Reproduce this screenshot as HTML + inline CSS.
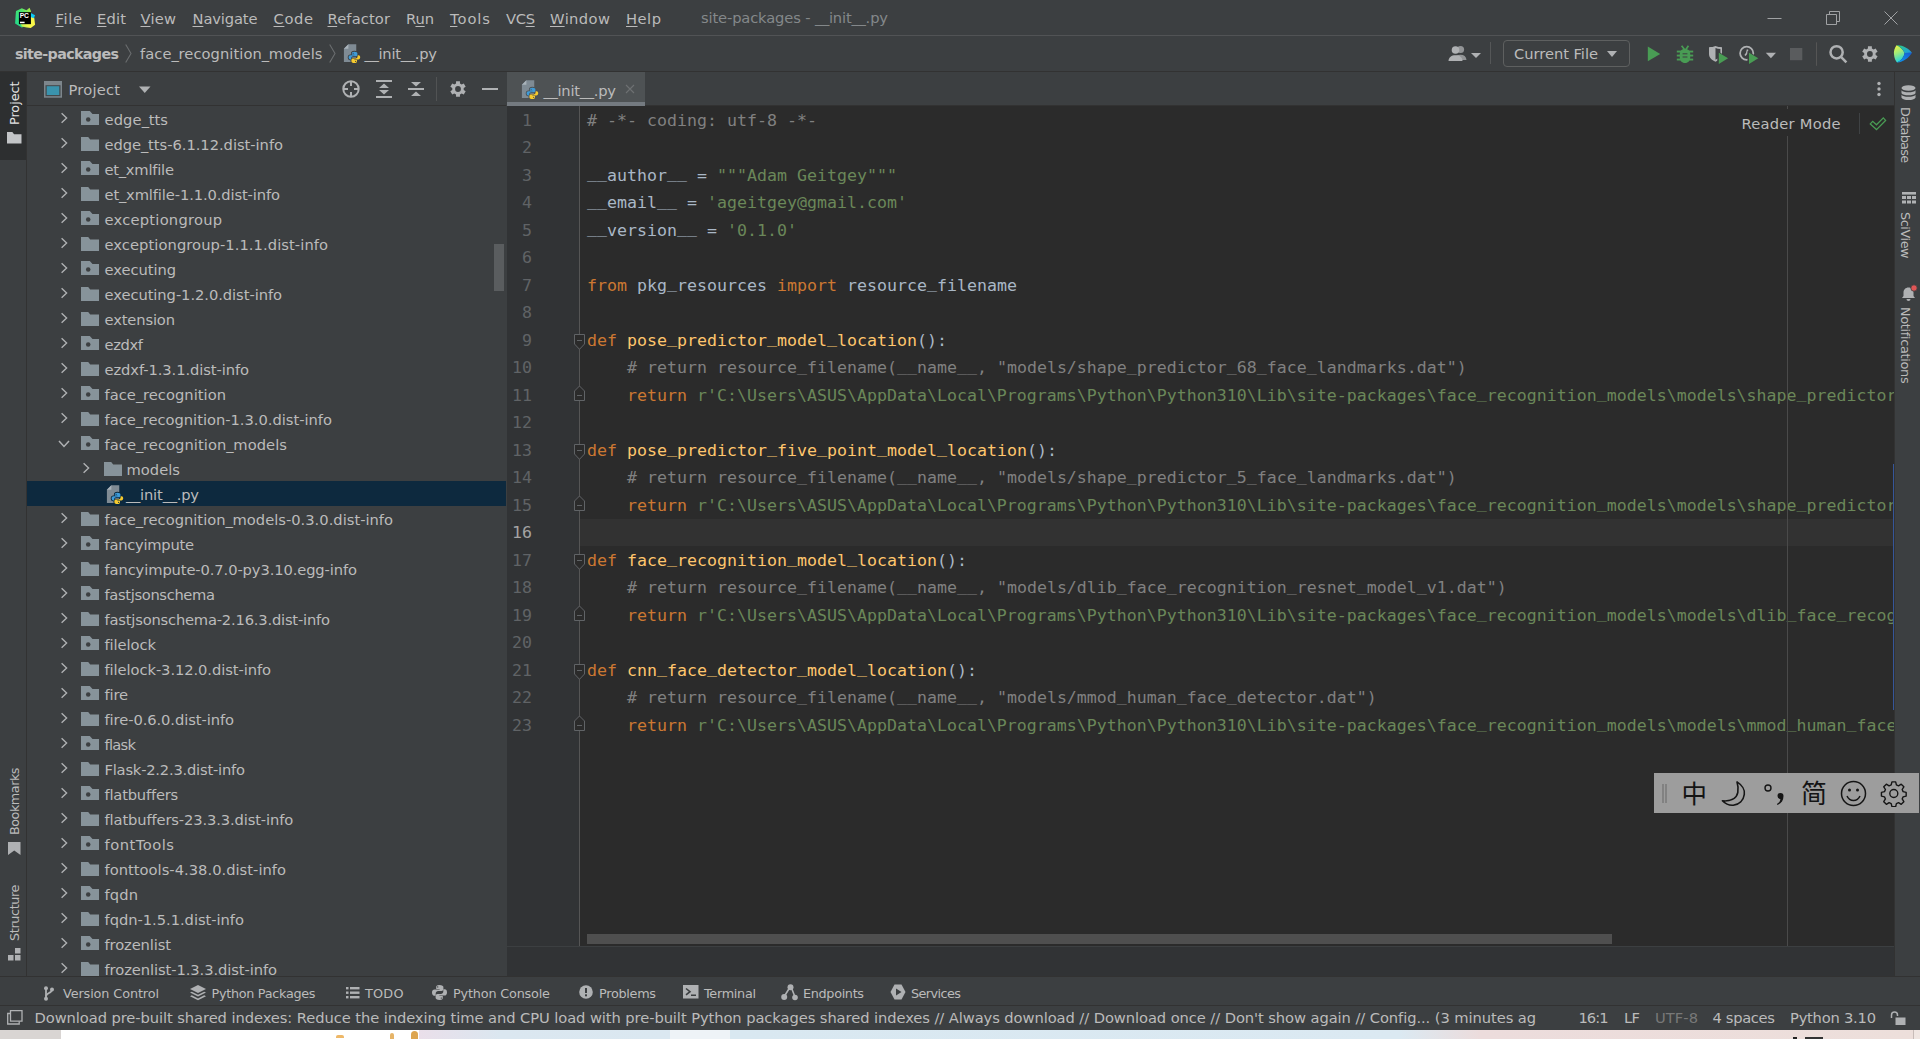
<!DOCTYPE html>
<html lang="en"><head><meta charset="utf-8"><title>site-packages - __init__.py</title>
<style>
*{box-sizing:border-box;margin:0;padding:0}
html,body{width:1920px;height:1039px;overflow:hidden;background:#3c3f41}
body{font-family:"DejaVu Sans","Liberation Sans",sans-serif;font-size:14.7px;letter-spacing:0;color:#bbbbbb;position:relative}
.abs{position:absolute}
.t{position:absolute;white-space:pre;line-height:20px}
u{text-decoration:underline;text-underline-offset:2px;text-decoration-thickness:1px}
#menubar{left:0;top:0;width:1920px;height:36px;background:#3c3f41}
#navbar{left:0;top:35px;width:1920px;height:37px;background:#3c3f41;border-top:1px solid #515355;border-bottom:1px solid #323232}
#leftstrip{left:0;top:72px;width:27px;height:904px;background:#3c3f41;border-right:1px solid #323232}
#proj{left:27px;top:72px;width:479px;height:904px;background:#3c3f41;overflow:hidden}
#projhdr{left:0;top:0;width:479px;height:34px}
.row{position:absolute;left:0;width:479px;height:25px}
.row.sel{background:#0d293e}
.row .lbl{position:absolute;top:3.5px;line-height:20px;white-space:pre;color:#bbbbbb}
.row svg{position:absolute}
#edtabs{left:507px;top:72px;width:1387px;height:34px;background:#3c3f41}
#tab{left:0;top:0;width:138px;height:34px;background:#4e5254}
#editor{left:507px;top:106px;width:1387px;height:840px;background:#2b2b2b;overflow:hidden}
#gutter{left:0;top:0;width:73px;height:840px;background:#313335;border-right:1px solid #555555}
.ln{position:absolute;left:0;width:25px;text-align:right;color:#606366;font-family:"DejaVu Sans Mono","Liberation Mono",monospace;font-size:16.6px;letter-spacing:.006px;line-height:27.5px;height:27.5px;margin-top:.7px;padding-right:0}
.cl{position:absolute;left:80px;white-space:pre;color:#a9b7c6;font-family:"DejaVu Sans Mono","Liberation Mono",monospace;font-size:16.6px;letter-spacing:.006px;line-height:27.5px;height:27.5px;margin-top:.7px}
.cl i{font-style:normal;position:relative;top:-2.5px}.k{color:#cc7832}.s{color:#6a8759}.c{color:#808080}.f{color:#ffc66d}
#crumbs{left:507px;top:946px;width:1387px;height:30px;background:#313335;border-top:1px solid #3c3f41}
#rightstrip{left:1894px;top:72px;width:26px;height:904px;background:#3c3f41;border-left:1px solid #323232}
#bottomstrip{left:0;top:976px;width:1920px;height:29px;background:#3c3f41;border-top:1px solid #323232}
#status{left:0;top:1005px;width:1920px;height:25px;background:#3c3f41;border-top:1px solid #323232}
#desk{left:0;top:1030px;width:1920px;height:9px;background:linear-gradient(90deg,#d9d5d3 0,#d9d5d3 61px,#ffffff 61px,#ffffff 419.5px,#eadfea 419.5px,#dbe7f0 500px,#dbe8f1 670px,#eef3f7 670px,#eef3f7 730px,#d9e8f1 730px,#dbe9f2 1400px,#ecdcdc 1480px,#eddfdb 1913px,#c8bcb8 1913px,#c8bcb8 1914px,#f0e6e2 1914px,#f0e6e2 1920px)}
.vt{position:absolute;white-space:pre;font-size:13.5px;letter-spacing:.5px;line-height:16px;color:#bbbbbb}
.bt{position:absolute;top:6px;white-space:pre;font-size:13.5px;letter-spacing:.35px;line-height:18px;color:#bbbbbb}
.st{position:absolute;top:1px;white-space:pre;line-height:20px;color:#bbbbbb}

.ic{position:absolute}
</style></head><body>
<div id="menubar" class="abs"><svg class="ic" style="left:14px;top:7px" width="23" height="22" viewBox="0 0 23 22">
<defs><linearGradient id="pg1" x1="0" y1="1" x2="1" y2="0"><stop offset="0" stop-color="#1fd690"/><stop offset=".6" stop-color="#45e372"/><stop offset="1" stop-color="#b6f043"/></linearGradient>
<linearGradient id="pg2" x1="0" y1="1" x2="1" y2="0"><stop offset="0" stop-color="#9bea4f"/><stop offset=".35" stop-color="#f4f648"/><stop offset="1" stop-color="#fcf84a"/></linearGradient></defs>
<polygon points="2.0,3.9 7.8,1.2 12.5,3.3 15.5,0.8 16.9,3.9 16.9,17.0 7.8,20.5 1.1,16.5 1.7,7.3" fill="url(#pg1)"/>
<polygon points="6.9,17.2 16.9,17.0 16.9,10.1 20.2,10.4 21.1,17.8 16.8,21.0 12.5,20.5 7.8,19.6" fill="url(#pg2)"/>
<polygon points="16.9,5.9 21.1,8.2 19.8,11.2 16.9,10.1" fill="#0ccaf5"/>
<rect x="4.900" y="5.150" width="12" height="12" fill="#000"/>
<text x="5.700" y="11" font-family="Liberation Sans,sans-serif" font-weight="bold" font-size="6.700" letter-spacing="-.2" fill="#fff">PC</text><rect x="6" y="14.700" width="4.600" height="1.500" fill="#fff"/></svg><span class="t" style="left:55.5px;top:9px;font-size:14.7px;letter-spacing:0.641px;color:#bbbbbb;"><u>F</u>ile</span><span class="t" style="left:97px;top:9px;font-size:14.7px;letter-spacing:0.182px;color:#bbbbbb;"><u>E</u>dit</span><span class="t" style="left:140.5px;top:9px;font-size:14.7px;letter-spacing:0.214px;color:#bbbbbb;"><u>V</u>iew</span><span class="t" style="left:192.5px;top:9px;font-size:14.7px;letter-spacing:-0.127px;color:#bbbbbb;"><u>N</u>avigate</span><span class="t" style="left:273.5px;top:9px;font-size:14.7px;letter-spacing:0.63px;color:#bbbbbb;"><u>C</u>ode</span><span class="t" style="left:327.5px;top:9px;font-size:14.7px;letter-spacing:0.125px;color:#bbbbbb;"><u>R</u>efactor</span><span class="t" style="left:406px;top:9px;font-size:14.7px;letter-spacing:-0.086px;color:#bbbbbb;">R<u>u</u>n</span><span class="t" style="left:450px;top:9px;font-size:14.7px;letter-spacing:0.953px;color:#bbbbbb;"><u>T</u>ools</span><span class="t" style="left:506px;top:9px;font-size:14.7px;letter-spacing:-0.32px;color:#bbbbbb;">VC<u>S</u></span><span class="t" style="left:550px;top:9px;font-size:14.7px;letter-spacing:0.416px;color:#bbbbbb;"><u>W</u>indow</span><span class="t" style="left:626px;top:9px;font-size:14.7px;letter-spacing:0.505px;color:#bbbbbb;"><u>H</u>elp</span><span class="t" style="left:701px;top:7.5px;font-size:14.7px;letter-spacing:-0.138px;color:#84888a;">site-packages - <span style="letter-spacing:-0.344px">_</span><span style="letter-spacing:-0.344px">_</span>init<span style="letter-spacing:-0.344px">_</span><span style="letter-spacing:-0.344px">_</span>.py</span><svg class="ic" style="left:1760px;top:6px" width="150" height="26" viewBox="0 0 150 26"><g stroke="#a0a2a4" stroke-width="1" fill="none"><path d="M7.500 12.500h14"/><path d="M66.500 8.500h10v10h-10z"/><path d="M69.500 8.500v-3h10v10h-3"/><path d="M124.500 5.500l13 13M137.500 5.500l-13 13"/></g></svg></div>
<div id="navbar" class="abs"><span class="t" style="left:15px;top:7.5px;font-size:14.3px;letter-spacing:-0.652px;color:#bbbbbb;font-weight:bold;">site-packages</span><svg class="ic" style="left:125px;top:8px" width="8" height="19" viewBox="0 0 8 19"><path d="M.7 .5l5.300 9-5.300 9" fill="none" stroke="#6a6d6f" stroke-width="1.100"/></svg><span class="t" style="left:140px;top:7.5px;font-size:14.7px;letter-spacing:0.058px;color:#bbbbbb;">face<span style="letter-spacing:-0.344px">_</span>recognition<span style="letter-spacing:-0.344px">_</span>models</span><svg class="ic" style="left:329px;top:8px" width="8" height="19" viewBox="0 0 8 19"><path d="M.7 .5l5.300 9-5.300 9" fill="none" stroke="#6a6d6f" stroke-width="1.100"/></svg><svg class="ic" style="left:342.85px;top:7.3px" width="18" height="21" viewBox="0 0 18 21"><path d="M5.400 1.200h7.850V19H.9V5.700z" fill="#7f8b94"/><path d="M5.400 1.200v4.500H.9z" fill="#a9b3ba"/>
<g transform="translate(5.600 8.700) scale(.967 .942)"><path d="M5.900 0C3.900 0 3.300.900 3.300 1.900v1.400h2.800v.5H1.900C.700 3.800 0 4.700 0 6s.600 2.300 1.700 2.300h1V6.800c0-1.100.900-2 2-2h2.800c.900 0 1.600-.7 1.600-1.600V1.900C9.100.900 8.300 0 5.900 0z" fill="#3c3f41" stroke="#3c3f41" stroke-width="1.800"/><path d="M5.900 0C3.900 0 3.300.900 3.300 1.900v1.400h2.800v.5H1.900C.700 3.800 0 4.700 0 6s.600 2.300 1.700 2.300h1V6.800c0-1.100.900-2 2-2h2.800c.900 0 1.600-.7 1.600-1.600V1.900C9.100.900 8.300 0 5.900 0z" transform="rotate(180 6 6)" fill="#3c3f41" stroke="#3c3f41" stroke-width="1.800"/>
<path d="M5.900 0C3.900 0 3.300.900 3.300 1.900v1.400h2.800v.5H1.900C.700 3.800 0 4.700 0 6s.600 2.300 1.700 2.300h1V6.800c0-1.100.900-2 2-2h2.800c.900 0 1.600-.7 1.600-1.600V1.900C9.100.900 8.300 0 5.900 0z" fill="#3e9bd8"/><path d="M5.900 0C3.900 0 3.300.900 3.300 1.900v1.400h2.800v.5H1.900C.700 3.800 0 4.700 0 6s.600 2.300 1.700 2.300h1V6.800c0-1.100.900-2 2-2h2.800c.900 0 1.600-.7 1.600-1.600V1.900C9.100.900 8.300 0 5.900 0z" transform="rotate(180 6 6)" fill="#f5ca2e"/><circle cx="4.700" cy="1.700" r=".6" fill="#3c3f41"/><circle cx="7.300" cy="10.300" r=".6" fill="#3c3f41"/></g></svg><span class="t" style="left:364.5px;top:7.5px;font-size:14.7px;letter-spacing:-0.237px;color:#bbbbbb;"><span style="letter-spacing:-0.344px">_</span><span style="letter-spacing:-0.344px">_</span>init<span style="letter-spacing:-0.344px">_</span><span style="letter-spacing:-0.344px">_</span>.py</span><svg class="ic" style="left:1448px;top:8px" width="34" height="20" viewBox="0 0 34 20"><g fill="#afb1b3"><circle cx="12.500" cy="5.500" r="3.600" opacity=".75"/><path d="M6.500 16c.3-3.500 2.500-5.300 6-5.300s5.700 1.800 6 5.300z" opacity=".75"/><circle cx="7.500" cy="6" r="3.800"/><path d="M.5 17c.3-3.800 2.800-5.700 7-5.700s6.700 1.900 7 5.700z"/><path d="M23 9h10l-5 5z"/></g></svg><div class="abs" style="left:1490px;top:6px;width:1px;height:22px;background:#555758"></div><div class="abs" style="left:1503px;top:4px;width:127px;height:27px;border:1px solid #5e6060;border-radius:4px"></div><span class="t" style="left:1514px;top:8.2px;font-size:14.7px;letter-spacing:-0.038px;color:#bbbbbb;">Current File</span><svg class="ic" style="left:1606px;top:14px" width="12" height="8" viewBox="0 0 12 8"><path d="M1 1h10l-5 6z" fill="#afb1b3"/></svg><svg class="ic" style="left:1640px;top:4px" width="280" height="28" viewBox="0 0 280 28">
<path d="M7.800 6.600v14.700l12.400-7.350z" fill="#499c54"/>
<g fill="#499c54"><path d="M45 8.700c3.200 0 5.200 2.300 5.200 5.300v3.500c0 3-2 5.500-5.200 5.500s-5.200-2.500-5.200-5.500V14c0-3 2-5.300 5.200-5.300z"/><rect x="36.800" y="10.600" width="16.400" height="1.900"/><rect x="36.800" y="14.600" width="16.400" height="1.900"/><rect x="36.800" y="18.600" width="16.400" height="1.900"/></g>
<g stroke="#499c54" stroke-width="1.700" fill="none"><path d="M41.600 5.800l2.700 3.500M48.400 5.800l-2.300 3.500"/></g>
<g fill="#3c3f41"><rect x="42.600" y="13.300" width="4.800" height="1"/><rect x="42.600" y="16.500" width="4.800" height="1"/></g>
<path d="M69 7.200c2.500 0 4.500-.4 6.500-1.200 2 .8 4 1.200 6.500 1.200v6.800c0 3.500-2.600 6-6.500 7.700-3.900-1.700-6.500-4.200-6.500-7.700z" fill="#afb1b3"/><path d="M75.500 7.900c1.600.6 3.200.9 4.900 1v5.100c0 2.300-1.700 4.300-4.900 5.800z" fill="#3c3f41"/>
<path d="M77.300 11v14.800l12.800-7.400z" fill="#3c3f41"/><path d="M78.800 12.800v11.100l9.300-5.550z" fill="#499c54"/>
<g fill="none" stroke="#afb1b3" stroke-width="1.800"><circle cx="106.700" cy="13.300" r="6.600"/></g><path d="M107.600 9.500l-.9 3.800-1.700 2.300" fill="none" stroke="#afb1b3" stroke-width="1.600"/>
<path d="M107.500 11v14.800l12.800-7.400z" fill="#3c3f41"/><path d="M109 12.800v11.100l9.300-5.550z" fill="#499c54"/>
<path d="M125.800 12.800h10.200l-5.100 5.400z" fill="#afb1b3"/>
<rect x="150" y="8" width="12.300" height="12.200" fill="#5a5c5e"/>
<path d="M176.500 2.300v23.500" stroke="#555555" stroke-width="1"/>
<g fill="none" stroke="#afb1b3" stroke-width="2.500"><circle cx="196.600" cy="12.300" r="6.100"/><path d="M201.200 17.200l5.200 5.200"/></g>
<path transform="translate(229.900 14)" fill="#afb1b3" fill-rule="evenodd" d="M1.98 -5.45L1.94 -7.76L-1.94 -7.76L-1.98 -5.45L-3.73 -4.44L-5.75 -5.56L-7.69 -2.21L-5.71 -1.01L-5.71 1.01L-7.69 2.21L-5.75 5.56L-3.73 4.44L-1.98 5.45L-1.94 7.76L1.94 7.76L1.98 5.45L3.73 4.44L5.75 5.56L7.69 2.21L5.71 1.01L5.71 -1.01L7.69 -2.21L5.75 -5.56L3.73 -4.44zM2.90 0A2.90 2.90 0 1 0 -2.90 0A2.90 2.90 0 1 0 2.90 0z"/>
<defs><linearGradient id="cg1" x1="0" y1="0" x2=".3" y2="1"><stop offset="0" stop-color="#f6f538"/><stop offset=".5" stop-color="#9fe97c"/><stop offset="1" stop-color="#25d3dc"/></linearGradient>
<linearGradient id="cg2" x1="0" y1="0" x2="1" y2="1"><stop offset="0" stop-color="#2fcf7c"/><stop offset="1" stop-color="#1a96ec"/></linearGradient>
<linearGradient id="cg3" x1="1" y1="0" x2="0" y2="1"><stop offset="0" stop-color="#1858d0"/><stop offset="1" stop-color="#0d9df2"/></linearGradient></defs>
<path d="M256.500 5.200C254.500 8 253.600 11.500 254 14.300c.3 3.700 1.500 6.700 3.100 8.300 4.200-2.300 7-5.800 7.500-9.700-1.600-3.400-4.400-6.200-8.100-7.700z" fill="url(#cg1)"/>
<path d="M256.500 5.200C262.500 4.800 268.500 8.300 272 12.700l-7.400.2c-1.600-3.400-4.400-6.200-8.100-7.700z" fill="url(#cg2)"/>
<path d="M272 12.700c-3 5-8.500 9.300-14.900 9.900 4.200-2.300 7-5.800 7.500-9.700z" fill="url(#cg3)"/>
</svg></div>
<div id="leftstrip" class="abs"><div class="abs" style="left:0;top:0;width:26px;height:88px;background:#2d2f30"></div><span class="vt" style="left:7px;top:52.5px;font-size:12.8px;letter-spacing:-0.049px;color:#e4e4e4;transform-origin:0 0;transform:rotate(-90deg)">Project</span><svg class="ic" style="left:7px;top:60px" width="14.500" height="11.600" viewBox="0 0 15 12"><path d="M0 0h5.500l1.800 2.300H15V12H0z" fill="#c3c5c7"/></svg><span class="vt" style="left:7px;top:762.5px;font-size:12.8px;letter-spacing:-0.5px;color:#bbbbbb;transform-origin:0 0;transform:rotate(-90deg)">Bookmarks</span><svg class="ic" style="left:8px;top:770px" width="13" height="13" viewBox="0 0 13 13"><path d="M0 0h12.500v13l-6.250-4.500L0 13z" fill="#afb1b3"/></svg><span class="vt" style="left:7px;top:868.5px;font-size:12.8px;letter-spacing:-0.379px;color:#bbbbbb;transform-origin:0 0;transform:rotate(-90deg)">Structure</span><svg class="ic" style="left:8px;top:876px" width="13" height="13" viewBox="0 0 13 13"><g fill="#afb1b3"><rect x="7" y="0" width="5.500" height="5.500"/><rect x="0" y="7" width="5.500" height="5.500"/><rect x="7" y="7" width="5.500" height="5.500"/></g></svg></div>
<div id="proj" class="abs"><div id="projhdr" class="abs"><div class="abs" style="left:0;top:33px;width:479px;height:1px;background:#323232"></div><svg class="ic" style="left:17px;top:9px" width="19" height="17" viewBox="0 0 19 17"><rect x="0" y="0" width="18" height="16.700" fill="#7d868c"/><rect x="1.500" y="4.200" width="15" height="11" fill="#43484b"/><rect x="2.700" y="5.200" width="12.600" height="8.800" fill="#3a93ad"/></svg><span class="t" style="left:41.5px;top:8.2px;font-size:14.7px;letter-spacing:0.206px;color:#bbbbbb;">Project</span><svg class="ic" style="left:112px;top:14px" width="12" height="8" viewBox="0 0 12 8"><path d="M0 .5h11.500l-5.750 6.500z" fill="#afb1b3"/></svg><svg class="ic" style="left:310px;top:5px" width="165" height="24" viewBox="0 0 165 24"><g fill="none" stroke="#afb1b3" stroke-width="2"><circle cx="14" cy="12" r="7.700"/><path d="M14 4v5M14 15v5M6 12h5M17 12h5"/></g><g fill="#afb1b3"><rect x="39" y="3" width="16" height="2"/><rect x="39" y="19" width="16" height="2"/><path d="M47 6.500l5 4.500h-10zM47 17.500l5-4.500h-10z"/><rect x="71" y="11" width="16" height="2"/><path d="M79 9.500l5-4.500h-10zM79 14.500l5 4.500h-10z"/></g><path d="M99.500 0v24" stroke="#515354" stroke-width="1"/><path transform="translate(121 12) scale(1)" fill="#afb1b3" fill-rule="evenodd" d="M1.98 -5.45L1.94 -7.76L-1.94 -7.76L-1.98 -5.45L-3.73 -4.44L-5.75 -5.56L-7.69 -2.21L-5.71 -1.01L-5.71 1.01L-7.69 2.21L-5.75 5.56L-3.73 4.44L-1.98 5.45L-1.94 7.76L1.94 7.76L1.98 5.45L3.73 4.44L5.75 5.56L7.69 2.21L5.71 1.01L5.71 -1.01L7.69 -2.21L5.75 -5.56L3.73 -4.44zM2.90 0A2.90 2.90 0 1 0 -2.90 0A2.90 2.90 0 1 0 2.90 0z"/><rect x="145" y="11" width="16" height="2" fill="#afb1b3"/></svg></div>
<div class="row" style="top:34px"><svg width="10" height="12" viewBox="0 0 10 12" style="left:33px;top:6px"><path d="M1.600 1.200l5 4.800-5 4.800" fill="none" stroke="#afb1b3" stroke-width="1.400"/></svg><svg width="18" height="14" viewBox="0 0 18 14" style="left:54px;top:5px"><path d="M0 0h8.800l2.700 3H18V14H0z" fill="#87939a"/><circle cx="7.200" cy="8.600" r="2.250" fill="#3c3f41"/></svg><span class="lbl" style="left:77.5px;letter-spacing:0.102px">edge<span style="letter-spacing:-0.344px">_</span>tts</span></div>
<div class="row" style="top:59px"><svg width="10" height="12" viewBox="0 0 10 12" style="left:33px;top:6px"><path d="M1.600 1.200l5 4.800-5 4.800" fill="none" stroke="#afb1b3" stroke-width="1.400"/></svg><svg width="18" height="14" viewBox="0 0 18 14" style="left:54px;top:6px"><path d="M0 0h7.2l2 2.6H18V14H0z" fill="#87939a"/></svg><span class="lbl" style="left:77.5px;letter-spacing:-0.032px">edge<span style="letter-spacing:-0.344px">_</span>tts-6.1.12.dist-info</span></div>
<div class="row" style="top:84px"><svg width="10" height="12" viewBox="0 0 10 12" style="left:33px;top:6px"><path d="M1.600 1.200l5 4.800-5 4.800" fill="none" stroke="#afb1b3" stroke-width="1.400"/></svg><svg width="18" height="14" viewBox="0 0 18 14" style="left:54px;top:5px"><path d="M0 0h8.800l2.700 3H18V14H0z" fill="#87939a"/><circle cx="7.200" cy="8.600" r="2.250" fill="#3c3f41"/></svg><span class="lbl" style="left:77.5px;letter-spacing:-0.219px">et<span style="letter-spacing:-0.344px">_</span>xmlfile</span></div>
<div class="row" style="top:109px"><svg width="10" height="12" viewBox="0 0 10 12" style="left:33px;top:6px"><path d="M1.600 1.200l5 4.800-5 4.800" fill="none" stroke="#afb1b3" stroke-width="1.400"/></svg><svg width="18" height="14" viewBox="0 0 18 14" style="left:54px;top:6px"><path d="M0 0h7.2l2 2.6H18V14H0z" fill="#87939a"/></svg><span class="lbl" style="left:77.5px;letter-spacing:-0.115px">et<span style="letter-spacing:-0.344px">_</span>xmlfile-1.1.0.dist-info</span></div>
<div class="row" style="top:134px"><svg width="10" height="12" viewBox="0 0 10 12" style="left:33px;top:6px"><path d="M1.600 1.200l5 4.800-5 4.800" fill="none" stroke="#afb1b3" stroke-width="1.400"/></svg><svg width="18" height="14" viewBox="0 0 18 14" style="left:54px;top:5px"><path d="M0 0h8.800l2.700 3H18V14H0z" fill="#87939a"/><circle cx="7.200" cy="8.600" r="2.250" fill="#3c3f41"/></svg><span class="lbl" style="left:77.5px;letter-spacing:0.236px">exceptiongroup</span></div>
<div class="row" style="top:159px"><svg width="10" height="12" viewBox="0 0 10 12" style="left:33px;top:6px"><path d="M1.600 1.200l5 4.800-5 4.800" fill="none" stroke="#afb1b3" stroke-width="1.400"/></svg><svg width="18" height="14" viewBox="0 0 18 14" style="left:54px;top:6px"><path d="M0 0h7.2l2 2.6H18V14H0z" fill="#87939a"/></svg><span class="lbl" style="left:77.5px;letter-spacing:0.071px">exceptiongroup-1.1.1.dist-info</span></div>
<div class="row" style="top:184px"><svg width="10" height="12" viewBox="0 0 10 12" style="left:33px;top:6px"><path d="M1.600 1.200l5 4.800-5 4.800" fill="none" stroke="#afb1b3" stroke-width="1.400"/></svg><svg width="18" height="14" viewBox="0 0 18 14" style="left:54px;top:5px"><path d="M0 0h8.800l2.700 3H18V14H0z" fill="#87939a"/><circle cx="7.200" cy="8.600" r="2.250" fill="#3c3f41"/></svg><span class="lbl" style="left:77.5px;letter-spacing:-0.053px">executing</span></div>
<div class="row" style="top:209px"><svg width="10" height="12" viewBox="0 0 10 12" style="left:33px;top:6px"><path d="M1.600 1.200l5 4.800-5 4.800" fill="none" stroke="#afb1b3" stroke-width="1.400"/></svg><svg width="18" height="14" viewBox="0 0 18 14" style="left:54px;top:6px"><path d="M0 0h7.2l2 2.6H18V14H0z" fill="#87939a"/></svg><span class="lbl" style="left:77.5px;letter-spacing:-0.059px">executing-1.2.0.dist-info</span></div>
<div class="row" style="top:234px"><svg width="10" height="12" viewBox="0 0 10 12" style="left:33px;top:6px"><path d="M1.600 1.200l5 4.800-5 4.800" fill="none" stroke="#afb1b3" stroke-width="1.400"/></svg><svg width="18" height="14" viewBox="0 0 18 14" style="left:54px;top:6px"><path d="M0 0h7.2l2 2.6H18V14H0z" fill="#87939a"/></svg><span class="lbl" style="left:77.5px;letter-spacing:-0.139px">extension</span></div>
<div class="row" style="top:259px"><svg width="10" height="12" viewBox="0 0 10 12" style="left:33px;top:6px"><path d="M1.600 1.200l5 4.800-5 4.800" fill="none" stroke="#afb1b3" stroke-width="1.400"/></svg><svg width="18" height="14" viewBox="0 0 18 14" style="left:54px;top:5px"><path d="M0 0h8.800l2.700 3H18V14H0z" fill="#87939a"/><circle cx="7.200" cy="8.600" r="2.250" fill="#3c3f41"/></svg><span class="lbl" style="left:77.5px;letter-spacing:-0.359px">ezdxf</span></div>
<div class="row" style="top:284px"><svg width="10" height="12" viewBox="0 0 10 12" style="left:33px;top:6px"><path d="M1.600 1.200l5 4.800-5 4.800" fill="none" stroke="#afb1b3" stroke-width="1.400"/></svg><svg width="18" height="14" viewBox="0 0 18 14" style="left:54px;top:6px"><path d="M0 0h7.2l2 2.6H18V14H0z" fill="#87939a"/></svg><span class="lbl" style="left:77.5px;letter-spacing:-0.082px">ezdxf-1.3.1.dist-info</span></div>
<div class="row" style="top:309px"><svg width="10" height="12" viewBox="0 0 10 12" style="left:33px;top:6px"><path d="M1.600 1.200l5 4.800-5 4.800" fill="none" stroke="#afb1b3" stroke-width="1.400"/></svg><svg width="18" height="14" viewBox="0 0 18 14" style="left:54px;top:5px"><path d="M0 0h8.800l2.700 3H18V14H0z" fill="#87939a"/><circle cx="7.200" cy="8.600" r="2.250" fill="#3c3f41"/></svg><span class="lbl" style="left:77.5px;letter-spacing:0.039px">face<span style="letter-spacing:-0.344px">_</span>recognition</span></div>
<div class="row" style="top:334px"><svg width="10" height="12" viewBox="0 0 10 12" style="left:33px;top:6px"><path d="M1.600 1.200l5 4.800-5 4.800" fill="none" stroke="#afb1b3" stroke-width="1.400"/></svg><svg width="18" height="14" viewBox="0 0 18 14" style="left:54px;top:6px"><path d="M0 0h7.2l2 2.6H18V14H0z" fill="#87939a"/></svg><span class="lbl" style="left:77.5px;letter-spacing:-0.015px">face<span style="letter-spacing:-0.344px">_</span>recognition-1.3.0.dist-info</span></div>
<div class="row" style="top:359px"><svg width="12" height="10" viewBox="0 0 12 10" style="left:31px;top:8px"><path d="M1 2l5 5.5L11 2" fill="none" stroke="#afb1b3" stroke-width="1.5"/></svg><svg width="18" height="14" viewBox="0 0 18 14" style="left:54px;top:5px"><path d="M0 0h8.800l2.700 3H18V14H0z" fill="#87939a"/><circle cx="7.200" cy="8.600" r="2.250" fill="#3c3f41"/></svg><span class="lbl" style="left:77.5px;letter-spacing:0.058px">face<span style="letter-spacing:-0.344px">_</span>recognition<span style="letter-spacing:-0.344px">_</span>models</span></div>
<div class="row" style="top:384px"><svg width="10" height="12" viewBox="0 0 10 12" style="left:55px;top:6px"><path d="M1.600 1.200l5 4.800-5 4.800" fill="none" stroke="#afb1b3" stroke-width="1.400"/></svg><svg width="18" height="14" viewBox="0 0 18 14" style="left:77px;top:6px"><path d="M0 0h7.2l2 2.6H18V14H0z" fill="#87939a"/></svg><span class="lbl" style="left:99.5px;letter-spacing:0.022px">models</span></div>
<div class="row sel" style="top:409px"><svg class="ic" style="left:79px;top:3px" width="18" height="21" viewBox="0 0 18 21"><path d="M5.400 1.200h7.850V19H.9V5.700z" fill="#7f8b94"/><path d="M5.400 1.200v4.500H.9z" fill="#a9b3ba"/>
<g transform="translate(5.600 8.700) scale(.967 .942)"><path d="M5.900 0C3.900 0 3.300.900 3.300 1.900v1.400h2.800v.5H1.900C.700 3.800 0 4.700 0 6s.600 2.300 1.700 2.300h1V6.800c0-1.100.900-2 2-2h2.800c.900 0 1.600-.7 1.600-1.600V1.900C9.100.900 8.300 0 5.900 0z" fill="#0d293e" stroke="#0d293e" stroke-width="1.800"/><path d="M5.900 0C3.900 0 3.300.900 3.300 1.900v1.400h2.800v.5H1.900C.700 3.800 0 4.700 0 6s.600 2.300 1.700 2.300h1V6.800c0-1.100.900-2 2-2h2.800c.900 0 1.600-.7 1.600-1.600V1.900C9.100.900 8.300 0 5.900 0z" transform="rotate(180 6 6)" fill="#0d293e" stroke="#0d293e" stroke-width="1.800"/>
<path d="M5.900 0C3.900 0 3.300.900 3.300 1.900v1.400h2.800v.5H1.900C.700 3.800 0 4.700 0 6s.600 2.300 1.700 2.300h1V6.800c0-1.100.900-2 2-2h2.800c.900 0 1.600-.7 1.600-1.600V1.900C9.100.900 8.300 0 5.900 0z" fill="#3e9bd8"/><path d="M5.900 0C3.900 0 3.300.900 3.300 1.900v1.400h2.800v.5H1.900C.700 3.800 0 4.700 0 6s.600 2.300 1.700 2.300h1V6.800c0-1.100.900-2 2-2h2.800c.900 0 1.600-.7 1.600-1.600V1.900C9.100.900 8.300 0 5.900 0z" transform="rotate(180 6 6)" fill="#f5ca2e"/><circle cx="4.700" cy="1.700" r=".6" fill="#0d293e"/><circle cx="7.300" cy="10.300" r=".6" fill="#0d293e"/></g></svg><span class="lbl" style="left:99px;letter-spacing:-0.154px"><span style="letter-spacing:-0.344px">_</span><span style="letter-spacing:-0.344px">_</span>init<span style="letter-spacing:-0.344px">_</span><span style="letter-spacing:-0.344px">_</span>.py</span></div>
<div class="row" style="top:434px"><svg width="10" height="12" viewBox="0 0 10 12" style="left:33px;top:6px"><path d="M1.600 1.200l5 4.800-5 4.800" fill="none" stroke="#afb1b3" stroke-width="1.400"/></svg><svg width="18" height="14" viewBox="0 0 18 14" style="left:54px;top:6px"><path d="M0 0h7.2l2 2.6H18V14H0z" fill="#87939a"/></svg><span class="lbl" style="left:77.5px;letter-spacing:0.004px">face<span style="letter-spacing:-0.344px">_</span>recognition<span style="letter-spacing:-0.344px">_</span>models-0.3.0.dist-info</span></div>
<div class="row" style="top:459px"><svg width="10" height="12" viewBox="0 0 10 12" style="left:33px;top:6px"><path d="M1.600 1.200l5 4.800-5 4.800" fill="none" stroke="#afb1b3" stroke-width="1.400"/></svg><svg width="18" height="14" viewBox="0 0 18 14" style="left:54px;top:5px"><path d="M0 0h8.800l2.700 3H18V14H0z" fill="#87939a"/><circle cx="7.200" cy="8.600" r="2.250" fill="#3c3f41"/></svg><span class="lbl" style="left:77.5px;letter-spacing:-0.256px">fancyimpute</span></div>
<div class="row" style="top:484px"><svg width="10" height="12" viewBox="0 0 10 12" style="left:33px;top:6px"><path d="M1.600 1.200l5 4.800-5 4.800" fill="none" stroke="#afb1b3" stroke-width="1.400"/></svg><svg width="18" height="14" viewBox="0 0 18 14" style="left:54px;top:6px"><path d="M0 0h7.2l2 2.6H18V14H0z" fill="#87939a"/></svg><span class="lbl" style="left:77.5px;letter-spacing:-0.108px">fancyimpute-0.7.0-py3.10.egg-info</span></div>
<div class="row" style="top:509px"><svg width="10" height="12" viewBox="0 0 10 12" style="left:33px;top:6px"><path d="M1.600 1.200l5 4.800-5 4.800" fill="none" stroke="#afb1b3" stroke-width="1.400"/></svg><svg width="18" height="14" viewBox="0 0 18 14" style="left:54px;top:5px"><path d="M0 0h8.800l2.700 3H18V14H0z" fill="#87939a"/><circle cx="7.200" cy="8.600" r="2.250" fill="#3c3f41"/></svg><span class="lbl" style="left:77.5px;letter-spacing:-0.346px">fastjsonschema</span></div>
<div class="row" style="top:534px"><svg width="10" height="12" viewBox="0 0 10 12" style="left:33px;top:6px"><path d="M1.600 1.200l5 4.800-5 4.800" fill="none" stroke="#afb1b3" stroke-width="1.400"/></svg><svg width="18" height="14" viewBox="0 0 18 14" style="left:54px;top:6px"><path d="M0 0h7.2l2 2.6H18V14H0z" fill="#87939a"/></svg><span class="lbl" style="left:77.5px;letter-spacing:-0.195px">fastjsonschema-2.16.3.dist-info</span></div>
<div class="row" style="top:559px"><svg width="10" height="12" viewBox="0 0 10 12" style="left:33px;top:6px"><path d="M1.600 1.200l5 4.800-5 4.800" fill="none" stroke="#afb1b3" stroke-width="1.400"/></svg><svg width="18" height="14" viewBox="0 0 18 14" style="left:54px;top:5px"><path d="M0 0h8.800l2.700 3H18V14H0z" fill="#87939a"/><circle cx="7.200" cy="8.600" r="2.250" fill="#3c3f41"/></svg><span class="lbl" style="left:77.5px;letter-spacing:-0.076px">filelock</span></div>
<div class="row" style="top:584px"><svg width="10" height="12" viewBox="0 0 10 12" style="left:33px;top:6px"><path d="M1.600 1.200l5 4.800-5 4.800" fill="none" stroke="#afb1b3" stroke-width="1.400"/></svg><svg width="18" height="14" viewBox="0 0 18 14" style="left:54px;top:6px"><path d="M0 0h7.2l2 2.6H18V14H0z" fill="#87939a"/></svg><span class="lbl" style="left:77.5px;letter-spacing:-0.078px">filelock-3.12.0.dist-info</span></div>
<div class="row" style="top:609px"><svg width="10" height="12" viewBox="0 0 10 12" style="left:33px;top:6px"><path d="M1.600 1.200l5 4.800-5 4.800" fill="none" stroke="#afb1b3" stroke-width="1.400"/></svg><svg width="18" height="14" viewBox="0 0 18 14" style="left:54px;top:5px"><path d="M0 0h8.800l2.700 3H18V14H0z" fill="#87939a"/><circle cx="7.200" cy="8.600" r="2.250" fill="#3c3f41"/></svg><span class="lbl" style="left:77.5px;letter-spacing:-0.172px">fire</span></div>
<div class="row" style="top:634px"><svg width="10" height="12" viewBox="0 0 10 12" style="left:33px;top:6px"><path d="M1.600 1.200l5 4.800-5 4.800" fill="none" stroke="#afb1b3" stroke-width="1.400"/></svg><svg width="18" height="14" viewBox="0 0 18 14" style="left:54px;top:6px"><path d="M0 0h7.2l2 2.6H18V14H0z" fill="#87939a"/></svg><span class="lbl" style="left:77.5px;letter-spacing:-0.08px">fire-0.6.0.dist-info</span></div>
<div class="row" style="top:659px"><svg width="10" height="12" viewBox="0 0 10 12" style="left:33px;top:6px"><path d="M1.600 1.200l5 4.800-5 4.800" fill="none" stroke="#afb1b3" stroke-width="1.400"/></svg><svg width="18" height="14" viewBox="0 0 18 14" style="left:54px;top:5px"><path d="M0 0h8.800l2.700 3H18V14H0z" fill="#87939a"/><circle cx="7.200" cy="8.600" r="2.250" fill="#3c3f41"/></svg><span class="lbl" style="left:77.5px;letter-spacing:-0.73px">flask</span></div>
<div class="row" style="top:684px"><svg width="10" height="12" viewBox="0 0 10 12" style="left:33px;top:6px"><path d="M1.600 1.200l5 4.800-5 4.800" fill="none" stroke="#afb1b3" stroke-width="1.400"/></svg><svg width="18" height="14" viewBox="0 0 18 14" style="left:54px;top:6px"><path d="M0 0h7.2l2 2.6H18V14H0z" fill="#87939a"/></svg><span class="lbl" style="left:77.5px;letter-spacing:-0.21px">Flask-2.2.3.dist-info</span></div>
<div class="row" style="top:709px"><svg width="10" height="12" viewBox="0 0 10 12" style="left:33px;top:6px"><path d="M1.600 1.200l5 4.800-5 4.800" fill="none" stroke="#afb1b3" stroke-width="1.400"/></svg><svg width="18" height="14" viewBox="0 0 18 14" style="left:54px;top:5px"><path d="M0 0h8.800l2.700 3H18V14H0z" fill="#87939a"/><circle cx="7.200" cy="8.600" r="2.250" fill="#3c3f41"/></svg><span class="lbl" style="left:77.5px;letter-spacing:-0.2px">flatbuffers</span></div>
<div class="row" style="top:734px"><svg width="10" height="12" viewBox="0 0 10 12" style="left:33px;top:6px"><path d="M1.600 1.200l5 4.800-5 4.800" fill="none" stroke="#afb1b3" stroke-width="1.400"/></svg><svg width="18" height="14" viewBox="0 0 18 14" style="left:54px;top:6px"><path d="M0 0h7.2l2 2.6H18V14H0z" fill="#87939a"/></svg><span class="lbl" style="left:77.5px;letter-spacing:-0.124px">flatbuffers-23.3.3.dist-info</span></div>
<div class="row" style="top:759px"><svg width="10" height="12" viewBox="0 0 10 12" style="left:33px;top:6px"><path d="M1.600 1.200l5 4.800-5 4.800" fill="none" stroke="#afb1b3" stroke-width="1.400"/></svg><svg width="18" height="14" viewBox="0 0 18 14" style="left:54px;top:5px"><path d="M0 0h8.800l2.700 3H18V14H0z" fill="#87939a"/><circle cx="7.200" cy="8.600" r="2.250" fill="#3c3f41"/></svg><span class="lbl" style="left:77.5px;letter-spacing:0.512px">fontTools</span></div>
<div class="row" style="top:784px"><svg width="10" height="12" viewBox="0 0 10 12" style="left:33px;top:6px"><path d="M1.600 1.200l5 4.800-5 4.800" fill="none" stroke="#afb1b3" stroke-width="1.400"/></svg><svg width="18" height="14" viewBox="0 0 18 14" style="left:54px;top:6px"><path d="M0 0h7.2l2 2.6H18V14H0z" fill="#87939a"/></svg><span class="lbl" style="left:77.5px;letter-spacing:0.018px">fonttools-4.38.0.dist-info</span></div>
<div class="row" style="top:809px"><svg width="10" height="12" viewBox="0 0 10 12" style="left:33px;top:6px"><path d="M1.600 1.200l5 4.800-5 4.800" fill="none" stroke="#afb1b3" stroke-width="1.400"/></svg><svg width="18" height="14" viewBox="0 0 18 14" style="left:54px;top:5px"><path d="M0 0h8.800l2.700 3H18V14H0z" fill="#87939a"/><circle cx="7.200" cy="8.600" r="2.250" fill="#3c3f41"/></svg><span class="lbl" style="left:77.5px;letter-spacing:0.12px">fqdn</span></div>
<div class="row" style="top:834px"><svg width="10" height="12" viewBox="0 0 10 12" style="left:33px;top:6px"><path d="M1.600 1.200l5 4.800-5 4.800" fill="none" stroke="#afb1b3" stroke-width="1.400"/></svg><svg width="18" height="14" viewBox="0 0 18 14" style="left:54px;top:6px"><path d="M0 0h7.2l2 2.6H18V14H0z" fill="#87939a"/></svg><span class="lbl" style="left:77.5px;letter-spacing:-0.034px">fqdn-1.5.1.dist-info</span></div>
<div class="row" style="top:859px"><svg width="10" height="12" viewBox="0 0 10 12" style="left:33px;top:6px"><path d="M1.600 1.200l5 4.800-5 4.800" fill="none" stroke="#afb1b3" stroke-width="1.400"/></svg><svg width="18" height="14" viewBox="0 0 18 14" style="left:54px;top:5px"><path d="M0 0h8.800l2.700 3H18V14H0z" fill="#87939a"/><circle cx="7.200" cy="8.600" r="2.250" fill="#3c3f41"/></svg><span class="lbl" style="left:77.5px;letter-spacing:-0.111px">frozenlist</span></div>
<div class="row" style="top:884px"><svg width="10" height="12" viewBox="0 0 10 12" style="left:33px;top:6px"><path d="M1.600 1.200l5 4.800-5 4.800" fill="none" stroke="#afb1b3" stroke-width="1.400"/></svg><svg width="18" height="14" viewBox="0 0 18 14" style="left:54px;top:6px"><path d="M0 0h7.2l2 2.6H18V14H0z" fill="#87939a"/></svg><span class="lbl" style="left:77.5px;letter-spacing:-0.08px">frozenlist-1.3.3.dist-info</span></div>
<div class="abs" style="left:467px;top:172px;width:10px;height:47px;background:#5a5d5f"></div>
</div>
<div id="edtabs" class="abs"><div class="abs" style="left:0;top:33px;width:1387px;height:1px;background:#323232"></div><div id="tab" class="abs"></div><div class="abs" style="left:0;top:30px;width:138px;height:4px;background:#747a80"></div><svg class="ic" style="left:14px;top:7.1px" width="18" height="21" viewBox="0 0 18 21"><path d="M5.400 1.200h7.850V19H.9V5.700z" fill="#7f8b94"/><path d="M5.400 1.200v4.500H.9z" fill="#a9b3ba"/>
<g transform="translate(5.600 8.700) scale(.967 .942)"><path d="M5.900 0C3.900 0 3.300.900 3.300 1.900v1.400h2.800v.5H1.900C.700 3.800 0 4.700 0 6s.600 2.300 1.700 2.300h1V6.800c0-1.100.900-2 2-2h2.800c.900 0 1.600-.7 1.600-1.600V1.900C9.100.900 8.300 0 5.900 0z" fill="#4e5254" stroke="#4e5254" stroke-width="1.800"/><path d="M5.900 0C3.900 0 3.300.900 3.300 1.900v1.400h2.800v.5H1.900C.700 3.800 0 4.700 0 6s.600 2.300 1.700 2.300h1V6.800c0-1.100.900-2 2-2h2.800c.900 0 1.600-.7 1.600-1.600V1.900C9.100.900 8.300 0 5.900 0z" transform="rotate(180 6 6)" fill="#4e5254" stroke="#4e5254" stroke-width="1.800"/>
<path d="M5.900 0C3.900 0 3.300.900 3.300 1.900v1.400h2.800v.5H1.900C.700 3.800 0 4.700 0 6s.600 2.300 1.700 2.300h1V6.800c0-1.100.900-2 2-2h2.800c.900 0 1.600-.7 1.600-1.600V1.900C9.100.900 8.300 0 5.900 0z" fill="#3e9bd8"/><path d="M5.900 0C3.900 0 3.300.900 3.300 1.900v1.400h2.800v.5H1.900C.700 3.800 0 4.700 0 6s.600 2.300 1.700 2.300h1V6.800c0-1.100.900-2 2-2h2.800c.900 0 1.600-.7 1.600-1.600V1.900C9.100.900 8.300 0 5.900 0z" transform="rotate(180 6 6)" fill="#f5ca2e"/><circle cx="4.700" cy="1.700" r=".6" fill="#4e5254"/><circle cx="7.300" cy="10.300" r=".6" fill="#4e5254"/></g></svg><span class="t" style="left:36.5px;top:8.5px;font-size:14.7px;letter-spacing:-0.237px;color:#bbbbbb;"><span style="letter-spacing:-0.344px">_</span><span style="letter-spacing:-0.344px">_</span>init<span style="letter-spacing:-0.344px">_</span><span style="letter-spacing:-0.344px">_</span>.py</span><svg class="ic" style="left:118px;top:12px" width="10" height="10" viewBox="0 0 10 10"><path d="M1 1l8 8M9 1l-8 8" stroke="#6e7173" stroke-width="1.100"/></svg><svg class="ic" style="left:1369px;top:9px" width="6" height="16" viewBox="0 0 6 16"><g fill="#afb1b3"><circle cx="3" cy="2.500" r="1.700"/><circle cx="3" cy="8" r="1.700"/><circle cx="3" cy="13.500" r="1.700"/></g></svg></div>
<div id="editor" class="abs">
<div class="abs" style="left:73px;top:412.5px;width:1314px;height:27.5px;background:#323232"></div>
<div id="gutter" class="abs"></div>
<div class="ln" style="top:0px">1</div>
<div class="cl" style="top:0px"><span class="c"># -*- coding: utf-8 -*-</span></div>
<div class="ln" style="top:27.5px">2</div>
<div class="ln" style="top:55px">3</div>
<div class="cl" style="top:55px"><i>__</i>author<i>__</i> = <span class="s">"""Adam Geitgey"""</span></div>
<div class="ln" style="top:82.5px">4</div>
<div class="cl" style="top:82.5px"><i>__</i>email<i>__</i> = <span class="s">'ageitgey@gmail.com'</span></div>
<div class="ln" style="top:110px">5</div>
<div class="cl" style="top:110px"><i>__</i>version<i>__</i> = <span class="s">'0.1.0'</span></div>
<div class="ln" style="top:137.5px">6</div>
<div class="ln" style="top:165px">7</div>
<div class="cl" style="top:165px"><span class="k">from</span> pkg<i>_</i>resources <span class="k">import</span> resource<i>_</i>filename</div>
<div class="ln" style="top:192.5px">8</div>
<div class="ln" style="top:220px">9</div>
<div class="cl" style="top:220px"><span class="k">def</span> <span class="f">pose<i>_</i>predictor<i>_</i>model<i>_</i>location</span>():</div>
<div class="ln" style="top:247.5px">10</div>
<div class="cl" style="top:247.5px">    <span class="c"># return resource<i>_</i>filename(<i>__</i>name<i>__</i>, "models/shape<i>_</i>predictor<i>_</i>68<i>_</i>face<i>_</i>landmarks.dat")</span></div>
<div class="ln" style="top:275px">11</div>
<div class="cl" style="top:275px">    <span class="k">return</span> <span class="s">r'C:\Users\ASUS\AppData\Local\Programs\Python\Python310\Lib\site-packages\face<i>_</i>recognition<i>_</i>models\models\shape<i>_</i>predictor<i>_</i>68<i>_</i>face<i>_</i>landmarks.dat'</span></div>
<div class="ln" style="top:302.5px">12</div>
<div class="ln" style="top:330px">13</div>
<div class="cl" style="top:330px"><span class="k">def</span> <span class="f">pose<i>_</i>predictor<i>_</i>five<i>_</i>point<i>_</i>model<i>_</i>location</span>():</div>
<div class="ln" style="top:357.5px">14</div>
<div class="cl" style="top:357.5px">    <span class="c"># return resource<i>_</i>filename(<i>__</i>name<i>__</i>, "models/shape<i>_</i>predictor<i>_</i>5<i>_</i>face<i>_</i>landmarks.dat")</span></div>
<div class="ln" style="top:385px">15</div>
<div class="cl" style="top:385px">    <span class="k">return</span> <span class="s">r'C:\Users\ASUS\AppData\Local\Programs\Python\Python310\Lib\site-packages\face<i>_</i>recognition<i>_</i>models\models\shape<i>_</i>predictor<i>_</i>5<i>_</i>face<i>_</i>landmarks.dat'</span></div>
<div class="ln" style="top:412.5px;color:#a4a3a3">16</div>
<div class="ln" style="top:440px">17</div>
<div class="cl" style="top:440px"><span class="k">def</span> <span class="f">face<i>_</i>recognition<i>_</i>model<i>_</i>location</span>():</div>
<div class="ln" style="top:467.5px">18</div>
<div class="cl" style="top:467.5px">    <span class="c"># return resource<i>_</i>filename(<i>__</i>name<i>__</i>, "models/dlib<i>_</i>face<i>_</i>recognition<i>_</i>resnet<i>_</i>model<i>_</i>v1.dat")</span></div>
<div class="ln" style="top:495px">19</div>
<div class="cl" style="top:495px">    <span class="k">return</span> <span class="s">r'C:\Users\ASUS\AppData\Local\Programs\Python\Python310\Lib\site-packages\face<i>_</i>recognition<i>_</i>models\models\dlib<i>_</i>face<i>_</i>recognition<i>_</i>resnet<i>_</i>model<i>_</i>v1.dat'</span></div>
<div class="ln" style="top:522.5px">20</div>
<div class="ln" style="top:550px">21</div>
<div class="cl" style="top:550px"><span class="k">def</span> <span class="f">cnn<i>_</i>face<i>_</i>detector<i>_</i>model<i>_</i>location</span>():</div>
<div class="ln" style="top:577.5px">22</div>
<div class="cl" style="top:577.5px">    <span class="c"># return resource<i>_</i>filename(<i>__</i>name<i>__</i>, "models/mmod<i>_</i>human<i>_</i>face<i>_</i>detector.dat")</span></div>
<div class="ln" style="top:605px">23</div>
<div class="cl" style="top:605px">    <span class="k">return</span> <span class="s">r'C:\Users\ASUS\AppData\Local\Programs\Python\Python310\Lib\site-packages\face<i>_</i>recognition<i>_</i>models\models\mmod<i>_</i>human<i>_</i>face<i>_</i>detector.dat'</span></div>
<div class="abs" style="left:1280px;top:0;width:1px;height:840px;background:#4a4a4a"></div><div class="abs" style="left:1225px;top:3px;width:162px;height:27px;background:#2b2b2b"></div><span class="t" style="left:1234.5px;top:7.7px;font-size:14.7px;letter-spacing:0.233px;color:#bbbbbb;">Reader Mode</span><div class="abs" style="left:1352px;top:7px;width:1px;height:21px;background:#3f4244"></div><svg class="ic" style="left:1362px;top:10px" width="18" height="15" viewBox="0 0 18 15"><path d="M1.300 7.900l2.400-2.600 3.800 3.500 6.800-6.900 2.300 2.500-9.100 9.200z" fill="none" stroke="#499c54" stroke-width="1.300" stroke-linejoin="miter"/></svg><svg class="ic" style="left:67px;top:228px" width="11" height="16" viewBox="0 0 11 16"><path d="M.5 .5h10v9.500l-5 5.300-5-5.300z" fill="#2b2b2b" stroke="#606366"/><path d="M3 6.500h5" stroke="#606366"/></svg><svg class="ic" style="left:67px;top:338px" width="11" height="16" viewBox="0 0 11 16"><path d="M.5 .5h10v9.500l-5 5.300-5-5.300z" fill="#2b2b2b" stroke="#606366"/><path d="M3 6.500h5" stroke="#606366"/></svg><svg class="ic" style="left:67px;top:448px" width="11" height="16" viewBox="0 0 11 16"><path d="M.5 .5h10v9.500l-5 5.300-5-5.300z" fill="#2b2b2b" stroke="#606366"/><path d="M3 6.500h5" stroke="#606366"/></svg><svg class="ic" style="left:67px;top:558px" width="11" height="16" viewBox="0 0 11 16"><path d="M.5 .5h10v9.500l-5 5.300-5-5.300z" fill="#2b2b2b" stroke="#606366"/><path d="M3 6.500h5" stroke="#606366"/></svg><svg class="ic" style="left:67px;top:279px" width="11" height="16" viewBox="0 0 11 16"><path d="M.5 15.500h10V6l-5-5-5 5z" fill="#2b2b2b" stroke="#606366"/><path d="M3 10.500h5" stroke="#606366"/></svg><svg class="ic" style="left:67px;top:389px" width="11" height="16" viewBox="0 0 11 16"><path d="M.5 15.500h10V6l-5-5-5 5z" fill="#2b2b2b" stroke="#606366"/><path d="M3 10.500h5" stroke="#606366"/></svg><svg class="ic" style="left:67px;top:499px" width="11" height="16" viewBox="0 0 11 16"><path d="M.5 15.500h10V6l-5-5-5 5z" fill="#2b2b2b" stroke="#606366"/><path d="M3 10.500h5" stroke="#606366"/></svg><svg class="ic" style="left:67px;top:609px" width="11" height="16" viewBox="0 0 11 16"><path d="M.5 15.500h10V6l-5-5-5 5z" fill="#2b2b2b" stroke="#606366"/><path d="M3 10.500h5" stroke="#606366"/></svg><div class="abs" style="left:80px;top:828px;width:1025px;height:10px;background:#4f4f4f"></div><div class="abs" style="left:1386px;top:358px;width:1px;height:246px;background:#35569a"></div>
</div>
<div id="crumbs" class="abs"></div>
<div id="rightstrip" class="abs"><svg class="ic" style="left:6px;top:13px" width="15" height="16" viewBox="0 0 15 16"><g fill="#afb1b3"><ellipse cx="7.500" cy="3" rx="7" ry="2.800"/><path d="M.5 5.200c1 1.400 3.500 2.100 7 2.100s6-.7 7-2.100v3c-1 1.400-3.500 2.100-7 2.100s-6-.7-7-2.100zM.5 9.700c1 1.400 3.500 2.100 7 2.100s6-.7 7-2.100v3c-1 1.400-3.500 2.300-7 2.300s-6-.9-7-2.300z"/></g></svg><span class="vt" style="left:17.7px;top:34.7px;font-size:12.8px;letter-spacing:-0.723px;color:#bbbbbb;transform-origin:0 0;transform:rotate(90deg)">Database</span><svg class="ic" style="left:7px;top:120px" width="14" height="12" viewBox="0 0 14 12"><g fill="#afb1b3"><rect x="0" y="0" width="14" height="2.600"/><rect x="0" y="4" width="4" height="3"/><rect x="5" y="4" width="4" height="3"/><rect x="10" y="4" width="4" height="3"/><rect x="0" y="8.500" width="4" height="3"/><rect x="5" y="8.500" width="4" height="3"/><rect x="10" y="8.500" width="4" height="3"/></g></svg><span class="vt" style="left:17.7px;top:139.7px;font-size:12.8px;letter-spacing:-0.416px;color:#bbbbbb;transform-origin:0 0;transform:rotate(90deg)">SciView</span><svg class="ic" style="left:6px;top:212px" width="18" height="18" viewBox="0 0 18 18"><path d="M7.500 3.500c-3 0-5 2.200-5 5v3.500l-1.500 2h13l-1.500-2V8.500c0-2.800-2-5-5-5z" fill="#afb1b3"/><path d="M5.500 15h4a2 2 0 01-4 0z" fill="#afb1b3"/><circle cx="13" cy="4" r="3.200" fill="#e05555" stroke="#3c3f41" stroke-width=".8"/></svg><span class="vt" style="left:17.7px;top:234.7px;font-size:12.8px;letter-spacing:-0.291px;color:#bbbbbb;transform-origin:0 0;transform:rotate(90deg)">Notifications</span></div>
<div id="bottomstrip" class="abs"><svg class="ic" style="left:43px;top:9px" width="12" height="15" viewBox="0 0 12 15"><g fill="none" stroke="#afb1b3" stroke-width="1.800"><path d="M3 1v13"/><path d="M9 3.500c0 4-6 3-6 7"/></g><circle cx="3" cy="2.200" r="2" fill="#afb1b3"/><circle cx="9" cy="3.500" r="2" fill="#afb1b3"/><circle cx="3" cy="12.800" r="2" fill="#afb1b3"/></svg><span class="t" style="left:63px;top:6.5px;font-size:12.8px;letter-spacing:-0.099px;color:#bbbbbb;">Version Control</span><svg class="ic" style="left:190px;top:8px" width="16" height="16" viewBox="0 0 16 16"><g fill="#afb1b3"><path d="M8 0l8 4-8 4-8-4z"/><path d="M1.800 6.700L0 7.600l8 4 8-4-1.800-.9L8 9.800z"/><path d="M1.800 10.300L0 11.200l8 4 8-4-1.800-.9L8 13.400z"/></g></svg><span class="t" style="left:211.5px;top:6.5px;font-size:12.8px;letter-spacing:-0.296px;color:#bbbbbb;">Python Packages</span><svg class="ic" style="left:346px;top:10px" width="14" height="12" viewBox="0 0 14 12"><g fill="#afb1b3"><rect x="0" y="0" width="2.500" height="2.400"/><rect x="4" y="0" width="9.500" height="2.400"/><rect x="0" y="4.500" width="2.500" height="2.400"/><rect x="4" y="4.500" width="9.500" height="2.400"/><rect x="0" y="9" width="2.500" height="2.400"/><rect x="4" y="9" width="9.500" height="2.400"/></g></svg><span class="t" style="left:365px;top:6.5px;font-size:12.8px;letter-spacing:0.224px;color:#bbbbbb;">TODO</span><svg class="ic" style="left:432px;top:8px" width="15" height="15" viewBox="0 0 15 15"><g fill="#afb1b3"><path d="M7.300 0C4.500 0 4.200 1.200 4.200 2.200v1.700h3.400v.6H2.600C1 4.500 0 5.700 0 7.600s.9 3.100 2.200 3.100h1.500V8.600c0-1.400 1.100-2.500 2.500-2.500h3.300c1.100 0 1.900-.9 1.900-2V2.200C11.400 1 10.200 0 7.300 0zM5.700 1.200a.7.700 0 110 1.400.7.700 0 010-1.400z"/><path d="M7.700 15c2.800 0 3.100-1.200 3.100-2.200v-1.700H7.400v-.6h5c1.600 0 2.600-1.200 2.600-3.100s-.9-3.100-2.200-3.100h-1.500v2.100c0 1.400-1.100 2.500-2.500 2.500H5.500c-1.100 0-1.900.9-1.900 2v1.900c0 1.200 1.200 2.200 4.100 2.200zm1.600-1.200a.7.700 0 110-1.400.7.700 0 010 1.400z"/></g></svg><span class="t" style="left:453px;top:6.5px;font-size:12.8px;letter-spacing:-0.172px;color:#bbbbbb;">Python Console</span><svg class="ic" style="left:579px;top:8px" width="14" height="14" viewBox="0 0 14 14"><circle cx="7" cy="7" r="6.800" fill="#afb1b3"/><rect x="6" y="3" width="2" height="5" fill="#3c3f41"/><rect x="6" y="9.300" width="2" height="2" fill="#3c3f41"/></svg><span class="t" style="left:599px;top:6.5px;font-size:12.8px;letter-spacing:-0.286px;color:#bbbbbb;">Problems</span><svg class="ic" style="left:683px;top:8px" width="16" height="14" viewBox="0 0 16 14"><rect width="15.500" height="13.500" fill="#afb1b3"/><path d="M3 3.500l4 3.200-4 3.200" fill="none" stroke="#3c3f41" stroke-width="1.600"/><rect x="8" y="9.500" width="5" height="1.500" fill="#3c3f41"/></svg><span class="t" style="left:704px;top:6.5px;font-size:12.8px;letter-spacing:-0.299px;color:#bbbbbb;">Terminal</span><svg class="ic" style="left:781px;top:7px" width="17" height="17" viewBox="0 0 17 17"><g fill="#afb1b3"><circle cx="9.500" cy="3.200" r="3"/><circle cx="3.200" cy="13" r="3"/><circle cx="14" cy="13.500" r="2.800"/></g><g stroke="#afb1b3" stroke-width="1.600" fill="none"><path d="M8.500 4l-5 8M10.500 4l3.500 9"/></g></svg><span class="t" style="left:803px;top:6.5px;font-size:12.8px;letter-spacing:-0.328px;color:#bbbbbb;">Endpoints</span><svg class="ic" style="left:890px;top:7px" width="16" height="16" viewBox="0 0 16 16"><path d="M4.500 .5h7l4 7.500-4 7.500h-7l-4-7.500z" fill="#afb1b3"/><path d="M6 4.500v7l5.500-3.500z" fill="#3c3f41"/></svg><span class="t" style="left:911px;top:6.5px;font-size:12.8px;letter-spacing:-0.567px;color:#bbbbbb;">Services</span></div>
<div id="status" class="abs"><svg class="ic" style="left:7px;top:3.500px" width="16" height="15" viewBox="0 0 16 15"><g fill="none" stroke="#afb1b3" stroke-width="1.300"><path d="M3.500 .700h11.500v10.500h-11.500z"/><path d="M3.500 3.500h-2.800v10.500h11.500v-2.800"/></g></svg><span class="t" style="left:34.5px;top:1.8px;font-size:14.7px;letter-spacing:-0.078px;color:#bbbbbb;">Download pre-built shared indexes: Reduce the indexing time and CPU load with pre-built Python packages shared indexes // Always download // Download once // Don't show again // Config... (3 minutes ag</span><span class="t" style="left:1578.5px;top:1.8px;font-size:14.7px;letter-spacing:-0.995px;color:#bbbbbb;">16:1</span><span class="t" style="left:1624px;top:1.8px;font-size:14.7px;letter-spacing:-0.641px;color:#bbbbbb;">LF</span><span class="t" style="left:1655px;top:1.8px;font-size:14.7px;letter-spacing:0.043px;color:#787878;">UTF-8</span><span class="t" style="left:1712.5px;top:1.8px;font-size:14.7px;letter-spacing:-0.324px;color:#bbbbbb;">4 spaces</span><span class="t" style="left:1790px;top:1.8px;font-size:14.7px;letter-spacing:-0.23px;color:#bbbbbb;">Python 3.10</span><svg class="ic" style="left:1890px;top:5px" width="16" height="15" viewBox="0 0 16 15"><path d="M1.500 7V4a3 3 0 016 0v1" fill="none" stroke="#afb1b3" stroke-width="1.500"/><rect x="5.500" y="6.500" width="10" height="7.500" fill="#afb1b3"/></svg></div>
<div id="desk" class="abs"><div class="abs" style="left:336px;top:5px;width:8px;height:3px;background:#eeb868;border-radius:2px 2px 0 0"></div><div class="abs" style="left:390px;top:3px;width:4px;height:6px;background:#e6b468;border-radius:3px 3px 0 0"></div><div class="abs" style="left:411px;top:1px;width:7px;height:8px;background:#dda550;border-radius:4px 4px 0 0"></div><div class="abs" style="left:1793px;top:7px;width:4px;height:2px;background:#222"></div><div class="abs" style="left:1805px;top:7px;width:18px;height:2px;background:#333"></div></div>
<div class="abs" style="left:1654px;top:773px;width:265px;height:40px;background:#9d9d9d"><div class="abs" style="left:8px;top:11px;width:2px;height:19px;background:#828282"></div><div class="abs" style="left:11px;top:11px;width:2px;height:19px;background:#828282"></div><span class="abs" style="left:27.5px;top:5px;font:25.5px/32px 'Liberation Sans','Noto Sans CJK SC',sans-serif;letter-spacing:0;color:#151515">中</span><svg class="ic" style="left:66px;top:8px" width="27" height="26" viewBox="0 0 27 26"><path d="M17 .9C22 4 25 9 24.300 13.300 23.500 19.500 19 23.500 13.300 24.200 9 24.500 5 22.500 2.400 19.800 10 20.500 16.500 18 17.800 11.500 18.500 7.500 18 4 17 .9Z" fill="none" stroke="#151515" stroke-width="1.600" stroke-linejoin="round"/></svg><svg class="ic" style="left:109px;top:10px" width="26" height="24" viewBox="0 0 26 24"><circle cx="5" cy="5" r="3" fill="none" stroke="#151515" stroke-width="1.400"/><path d="M14.500 13a3 3 0 116 0c0 4.500-2.300 7.500-6 9l-.6-1c2.200-1.200 3.300-2.800 3.500-5a3 3 0 01-2.900-3z" fill="#151515"/></svg><span class="abs" style="left:147px;top:5px;font:26px/32px 'Liberation Sans','Noto Sans CJK SC',sans-serif;letter-spacing:0;color:#151515">简</span><svg class="ic" style="left:186px;top:7px" width="27" height="27" viewBox="0 0 27 27"><g fill="none" stroke="#151515" stroke-width="1.500"><circle cx="13.500" cy="13.500" r="12"/><path d="M7 16c1.500 3.300 4 4.500 6.500 4.500S18.500 19.300 20 16"/></g><circle cx="9.500" cy="10" r="1.500" fill="#151515"/><circle cx="17.500" cy="10" r="1.500" fill="#151515"/></svg><svg class="ic" style="left:226px;top:7px" width="27" height="27" viewBox="0 0 27 27"><g transform="translate(13.800 13.500) scale(.93)" fill="none" stroke="#151515" stroke-width="1.500" stroke-linejoin="round"><path d="M-2 -12.500h4l.8 3.300 2.300 1 2.900-1.800 2.800 2.800-1.800 2.900 1 2.300 3.300.8v4l-3.300.8-1 2.300 1.800 2.900-2.800 2.800-2.900-1.800-2.300 1-.8 3.300h-4l-.8-3.300-2.300-1-2.900 1.800-2.800-2.800 1.800-2.900-1-2.300-3.300-.8v-4l3.300-.8 1-2.300-1.800-2.900 2.800-2.800 2.900 1.800 2.300-1z"/><circle r="4.300"/></g></svg></div>
</body></html>
